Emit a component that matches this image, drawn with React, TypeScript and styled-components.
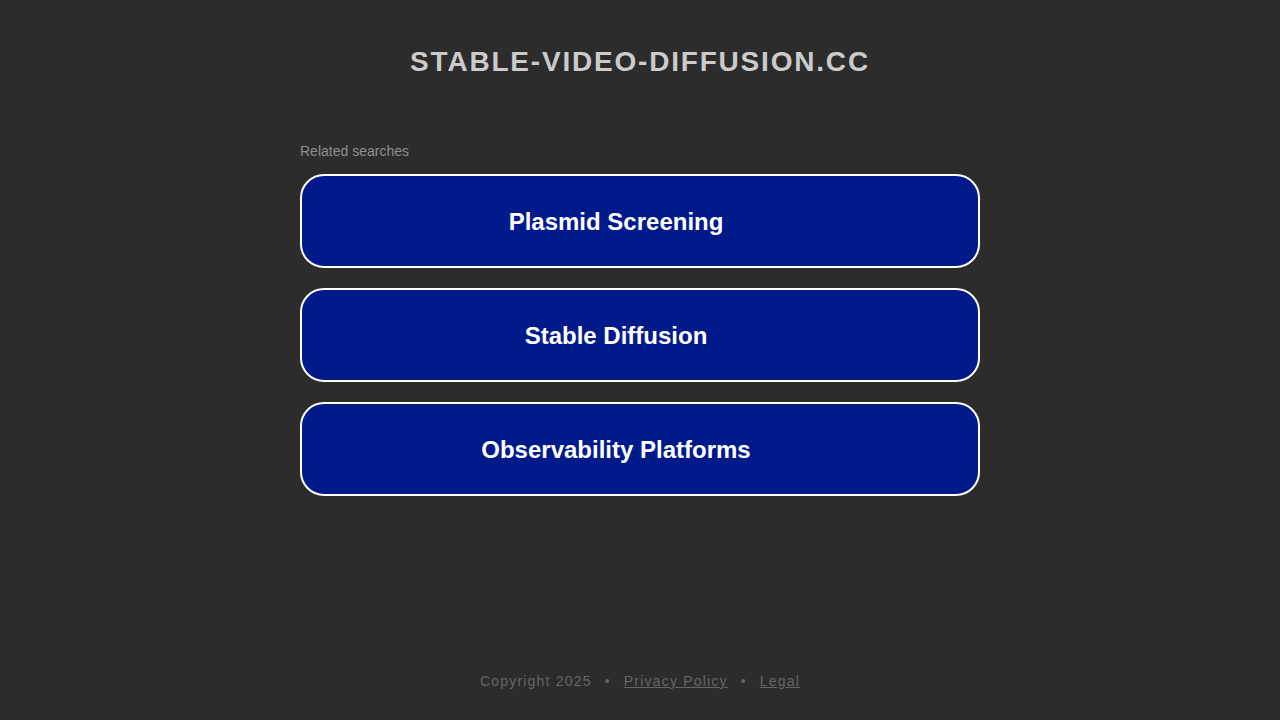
import React from "react";
import styled, { createGlobalStyle } from "styled-components";

const Global = createGlobalStyle`
  html, body { margin: 0; padding: 0; background: #2c2c2c; }
  body { font-family: "Liberation Sans", Arial, sans-serif; }
`;

const Page = styled.div`
  min-height: 720px;
  display: flex;
  flex-direction: column;
  align-items: center;
`;

const Title = styled.h1`
  margin: 45px 0 0;
  font-size: 28px;
  line-height: 34px;
  font-weight: bold;
  letter-spacing: 1.8px;
  color: #cbcbcb;
  text-align: center;
`;

const Main = styled.div`
  width: 680px;
  margin-top: 64px;
  display: flex;
  flex-direction: column;
`;

const Label = styled.div`
  font-size: 14px;
  line-height: 16px;
  color: #8f8f8f;
  margin-bottom: 15px;
`;

const List = styled.div`
  display: flex;
  flex-direction: column;
  gap: 20px;
`;

const Item = styled.a`
  box-sizing: border-box;
  height: 94px;
  border: 2px solid #ffffff;
  border-radius: 24px;
  background: #011a8a;
  display: flex;
  align-items: center;
  justify-content: center;
  padding: 2px 48px 0 0;
  color: #ffffff;
  font-size: 24px;
  font-weight: bold;
  text-decoration: none;
`;

const Spacer = styled.div`
  flex: 1;
`;

const Footer = styled.div`
  margin-bottom: 30px;
  font-size: 14px;
  line-height: 18px;
  letter-spacing: 1.2px;
  color: #666666;
  display: flex;
  gap: 13px;
`;

const FooterLink = styled.a`
  color: #666666;
  text-decoration: underline;
`;

export default function App() {
  const items = ["Plasmid Screening", "Stable Diffusion", "Observability Platforms"];
  return (
    <>
      <Global />
      <Page>
        <Title>STABLE-VIDEO-DIFFUSION.CC</Title>
        <Main>
          <Label>Related searches</Label>
          <List>
            {items.map((t) => (
              <Item key={t} href="#">{t}</Item>
            ))}
          </List>
        </Main>
        <Spacer />
        <Footer>
          <span>Copyright 2025</span>
          <span>•</span>
          <FooterLink href="#">Privacy Policy</FooterLink>
          <span>•</span>
          <FooterLink href="#">Legal</FooterLink>
        </Footer>
      </Page>
    </>
  );
}
